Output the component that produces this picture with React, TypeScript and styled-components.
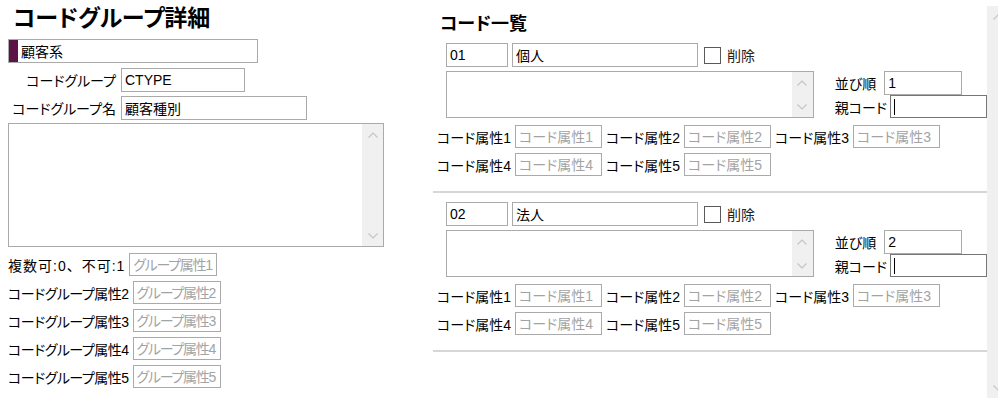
import styled, { createGlobalStyle } from 'styled-components';

const GlobalStyle = createGlobalStyle`
  html, body {
    margin: 0;
    padding: 0;
    overflow: hidden;
    background: #fff;
  }
  body {
    font-family: "Liberation Sans", "Noto Sans CJK JP", sans-serif;
    font-size: 14px;
    color: #000;
    font-feature-settings: "palt";
  }
`;

const Page = styled.div`
  display: flex;
  align-items: flex-start;
  width: 1010px;
`;

/* ---------- fake windows scrollbar ---------- */

const ScrollStrip = styled.div`
  flex: none;
  width: 21px;
  align-self: stretch;
  display: flex;
  flex-direction: column;
  justify-content: space-between;
  background: #f0f0f0;
`;

const ScrollButton = styled.div`
  width: 21px;
  height: 21px;
  display: flex;
  align-items: center;
  justify-content: center;
  background: #f0f0f0;
`;

function Scrollbar() {
  return (
    <ScrollStrip>
      <ScrollButton>
        <svg width="10" height="6" viewBox="0 0 10 6">
          <path d="M0.5 5.5L5 1l4.5 4.5" fill="none" stroke="#c4c4c4" strokeWidth="1.1" />
        </svg>
      </ScrollButton>
      <ScrollButton>
        <svg width="10" height="6" viewBox="0 0 10 6">
          <path d="M0.5 0.5L5 5l4.5-4.5" fill="none" stroke="#c4c4c4" strokeWidth="1.1" />
        </svg>
      </ScrollButton>
    </ScrollStrip>
  );
}

/* ---------- form parts ---------- */

const TextBox = styled.input<{ $w: number; $h?: number; $tight?: boolean }>`
  box-sizing: border-box;
  width: ${(p) => p.$w}px;
  height: ${(p) => p.$h ?? 24}px;
  margin: 0;
  padding: 0 3px;
  border: 1px solid #aaaaaa;
  border-radius: 0;
  background: #fff;
  font: inherit;
  font-size: 14px;
  font-feature-settings: "palt";
  color: #000;
  outline: none;
  &::placeholder {
    color: #a3a3a3;
    letter-spacing: ${(p) => (p.$tight ? '-1.3px' : 'normal')};
  }
`;

const MemoBox = styled.div<{ $w: number; $h: number }>`
  box-sizing: border-box;
  display: flex;
  width: ${(p) => p.$w}px;
  height: ${(p) => p.$h}px;
  border: 1px solid #aaaaaa;
  background: #fff;
`;

const MemoText = styled.textarea`
  flex: 1;
  min-width: 0;
  margin: 0;
  padding: 2px 3px;
  border: none;
  resize: none;
  font: inherit;
  outline: none;
  overflow: hidden;
`;

function Memo({ w, h }: { w: number; h: number }) {
  return (
    <MemoBox $w={w} $h={h}>
      <MemoText />
      <Scrollbar />
    </MemoBox>
  );
}

/* ---------- left: group detail ---------- */

const DetailPanel = styled.div`
  width: 376px;
  margin-left: 8px;
  display: flex;
  flex-direction: column;
`;

const DetailTitle = styled.h2`
  margin: 0;
  height: 35px;
  padding: 4px 0 0 5px;
  box-sizing: border-box;
  font-size: 23px;
  line-height: 28px;
  font-weight: bold;
`;

const GroupNameBox = styled(TextBox)`
  margin-top: 4px;
  padding-left: 12px;
  box-shadow: inset 9px 0 0 #5c1446;
`;

const FieldRow = styled.div<{ $top: number }>`
  display: flex;
  align-items: center;
  gap: 5px;
  margin-top: ${(p) => p.$top}px;
`;

const FieldLabel = styled.span`
  width: 108px;
  text-align: right;
  white-space: nowrap;
`;

const GroupMemoSlot = styled.div`
  margin-top: 3px;
`;

const GroupAttrs = styled.div`
  display: flex;
  flex-direction: column;
  gap: 5px;
  margin-top: 6px;
`;

const InlineRow = styled.div`
  display: flex;
  align-items: center;
  gap: 4px;
  white-space: nowrap;
`;

const GroupAttrLabel = styled.span<{ $plain?: boolean }>`
  letter-spacing: ${(p) => (p.$plain ? '1px' : '-0.5px')};
  font-feature-settings: ${(p) => (p.$plain ? 'normal' : '"palt"')};
`;

/* ---------- right: code list ---------- */

const ListArea = styled.div`
  display: flex;
  margin: 6px 0 0 49px;
  height: 392px;
`;

const ListContent = styled.div`
  width: 554px;
`;

const ListTitle = styled.h3`
  margin: 0;
  height: 28px;
  padding: 8px 0 0 7px;
  box-sizing: border-box;
  font-size: 18px;
  line-height: 20px;
  font-weight: bold;
`;

const CodeBlock = styled.div`
  padding: 9px 0 15px 4px;
  border-bottom: 2px solid #d6d6d6;
`;

const CodeHead = styled.div`
  display: flex;
  align-items: center;
  gap: 4px;
  margin-left: 9px;
`;

const DeleteCheck = styled.input`
  appearance: none;
  box-sizing: border-box;
  width: 17px;
  height: 17px;
  margin: 0 0 0 2px;
  border: 1px solid #5a5a5a;
  background: #fff;
`;

const DeleteLabel = styled.span`
  margin-left: 2px;
  color: #222;
`;

const CodeBody = styled.div`
  display: flex;
  margin: 4px 0 0 9px;
`;

const SideFields = styled.div`
  display: flex;
  flex-direction: column;
  margin-left: 21px;
`;

const SideRow = styled.div<{ $gap: number }>`
  display: flex;
  align-items: center;
  gap: ${(p) => p.$gap}px;
  white-space: nowrap;
`;

const ParentBox = styled(TextBox)`
  border-color: #767676;
  background: #fff linear-gradient(#000, #000) no-repeat 3px 3px / 1px 16px;
`;

const CodeAttrs = styled.div`
  display: flex;
  flex-direction: column;
  gap: 5px;
  margin-top: 7px;
`;

const codes = [
  { code: '01', name: '個人', order: '1' },
  { code: '02', name: '法人', order: '2' },
];

function AttrPair({ n }: { n: number }) {
  return (
    <>
      <span>コード属性{n}</span>
      <TextBox $w={87} $h={23} placeholder={`コード属性${n}`} />
    </>
  );
}

function CodeItem({ code, name, order }: { code: string; name: string; order: string }) {
  return (
    <CodeBlock>
      <CodeHead>
        <TextBox $w={62} defaultValue={code} />
        <TextBox $w={186} defaultValue={name} />
        <DeleteCheck type="checkbox" />
        <DeleteLabel>削除</DeleteLabel>
      </CodeHead>
      <CodeBody>
        <Memo w={369} h={47} />
        <SideFields>
          <SideRow $gap={8}>
            <span>並び順</span>
            <TextBox $w={78} defaultValue={order} />
          </SideRow>
          <SideRow $gap={3}>
            <span>親コード</span>
            <ParentBox $w={97} $h={23} />
          </SideRow>
        </SideFields>
      </CodeBody>
      <CodeAttrs>
        <InlineRow>
          {[1, 2, 3].map((n) => (
            <AttrPair key={n} n={n} />
          ))}
        </InlineRow>
        <InlineRow>
          {[4, 5].map((n) => (
            <AttrPair key={n} n={n} />
          ))}
        </InlineRow>
      </CodeAttrs>
    </CodeBlock>
  );
}

export default function App() {
  return (
    <>
      <GlobalStyle />
      <Page>
        <DetailPanel>
          <DetailTitle>コードグループ詳細</DetailTitle>
          <GroupNameBox $w={250} defaultValue="顧客系" />
          <FieldRow $top={5}>
            <FieldLabel>コードグループ</FieldLabel>
            <TextBox $w={124} defaultValue="CTYPE" />
          </FieldRow>
          <FieldRow $top={4}>
            <FieldLabel>コードグループ名</FieldLabel>
            <TextBox $w={186} defaultValue="顧客種別" />
          </FieldRow>
          <GroupMemoSlot>
            <Memo w={376} h={124} />
          </GroupMemoSlot>
          <GroupAttrs>
            <InlineRow>
              <GroupAttrLabel $plain>複数可:0、不可:1</GroupAttrLabel>
              <TextBox $w={88} $h={23} $tight placeholder="グループ属性1" />
            </InlineRow>
            {[2, 3, 4, 5].map((n) => (
              <InlineRow key={n}>
                <GroupAttrLabel>コードグループ属性{n}</GroupAttrLabel>
                <TextBox $w={88} $h={23} $tight placeholder={`グループ属性${n}`} />
              </InlineRow>
            ))}
          </GroupAttrs>
        </DetailPanel>
        <ListArea>
          <ListContent>
            <ListTitle>コード一覧</ListTitle>
            {codes.map((c) => (
              <CodeItem key={c.code} {...c} />
            ))}
          </ListContent>
          <Scrollbar />
        </ListArea>
      </Page>
    </>
  );
}
